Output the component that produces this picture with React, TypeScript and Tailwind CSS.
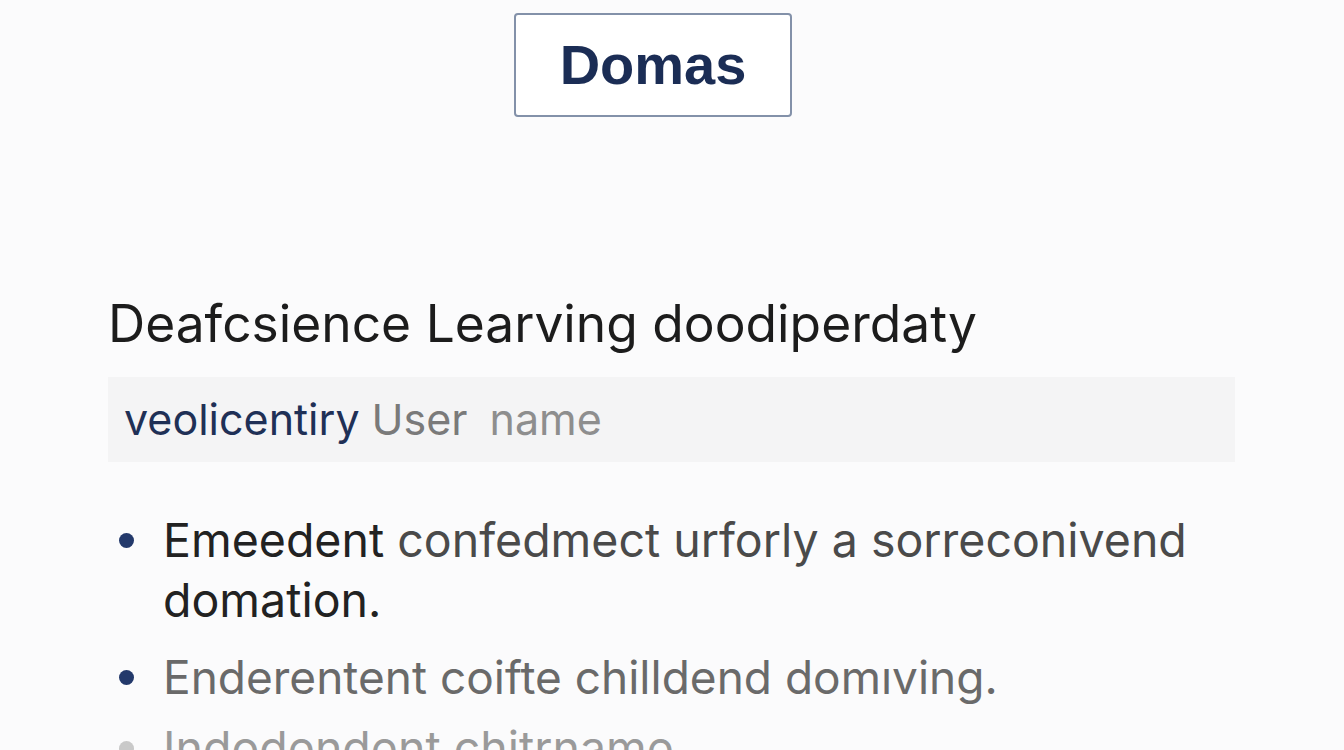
const font = { fontFamily: "Inter, 'Noto Sans', sans-serif" };

const Dot = ({ color }: { color: string }) => (
  <span className={`w-[15px] h-[15px] rounded-full mt-[23px] ml-[11px] mr-[29px] shrink-0 ${color}`} />
);

export default function App() {
  return (
    <div className="w-[1344px] h-[750px] overflow-hidden bg-[#fbfbfc]" style={font}>
      <div className="pl-[514px] pt-[13px]">
        <div
          className="w-[278px] h-[104px] flex items-center justify-center border-2 border-[#8391a9] rounded-[4px] bg-white text-[#1b2d55] text-[56px] font-bold"
          style={{ fontFamily: "'Liberation Sans', Arial, sans-serif" }}
        >
          Domas
        </div>
      </div>

      <div className="pl-[108px] pr-[109px] pt-[176px]">
        <h1 className="text-[51.5px] leading-[60px] text-[#1c1c1c] font-normal">
          Deafcsience Learving doodiperdaty
        </h1>
        <div className="mt-[24px] h-[85px] bg-[#f4f4f5] flex items-center pl-[16px] text-[43px]">
          <span className="text-[#1f3056]">veolicentiry</span>
          <span className="ml-[12px] text-[#7a7a7a]">User</span>
          <span className="ml-[22px] text-[#8e8e8e]">name</span>
        </div>

        <ul className="mt-[48px] flex flex-col text-[46.5px] leading-[60px]">
          <li className="flex">
            <Dot color="bg-[#23396b]" />
            <span className="text-[#4a4a4a]">
              <span className="text-[#222]">Emeedent</span> confedmect urforly a sorreconivend{" "}
              <span className="text-[#222]">domation.</span>
            </span>
          </li>
          <li className="flex mt-[17px]">
            <Dot color="bg-[#23396b]" />
            <span className="text-[#6a6a6a] text-[46px]">Enderentent coifte chilldend domıving.</span>
          </li>
          <li className="flex mt-[11px]">
            <Dot color="bg-[#c9c9c9]" />
            <span className="text-[#9a9a9a]">Indodendent chitrname</span>
          </li>
        </ul>
      </div>
    </div>
  );
}
